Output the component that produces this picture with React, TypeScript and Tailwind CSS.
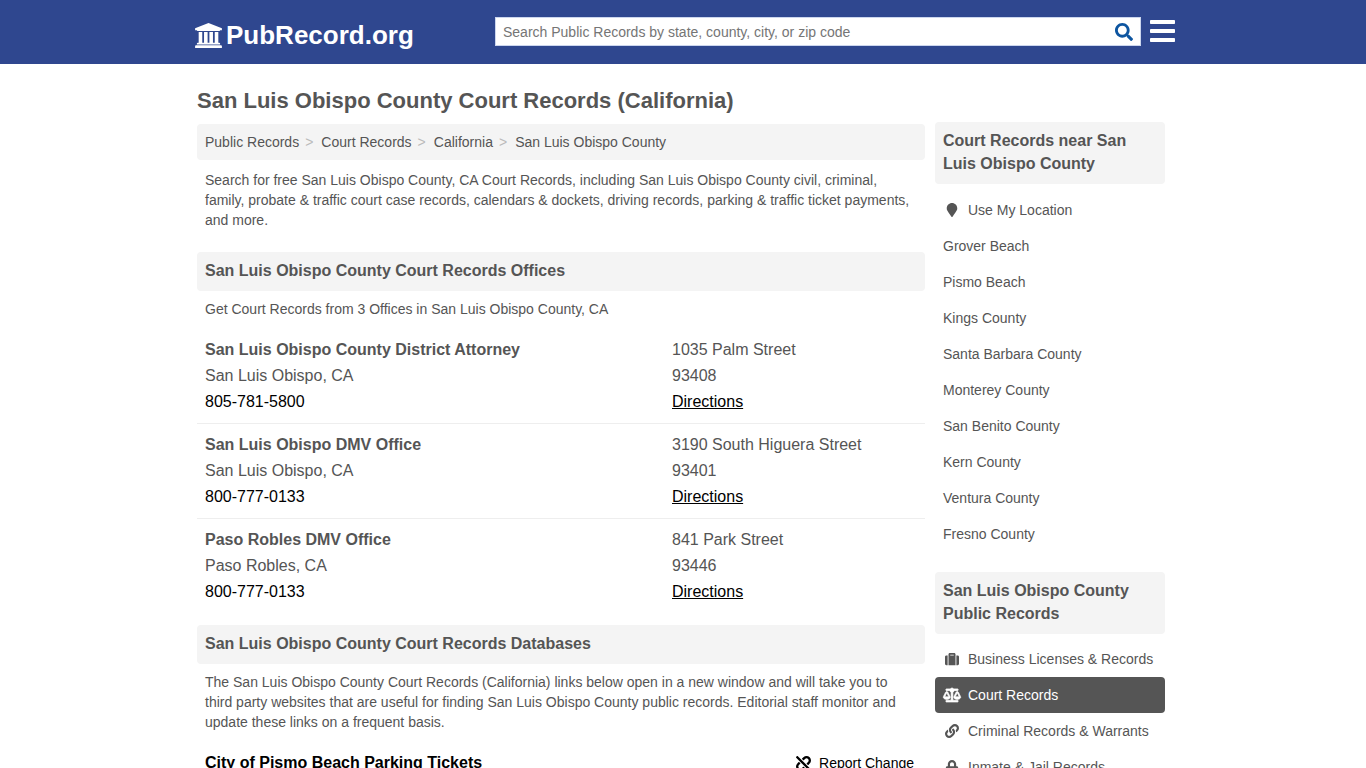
import type { ReactNode } from "react";
import type { IconType } from "react-icons";
import {
  FaBalanceScale,
  FaLink,
  FaLock,
  FaMapMarker,
  FaSearch,
  FaSuitcase,
  FaUnlink,
} from "react-icons/fa";

const crumbs = ["Public Records", "Court Records", "California", "San Luis Obispo County"];

const offices = [
  {
    name: "San Luis Obispo County District Attorney",
    city: "San Luis Obispo, CA",
    phone: "805-781-5800",
    street: "1035 Palm Street",
    zip: "93408",
  },
  {
    name: "San Luis Obispo DMV Office",
    city: "San Luis Obispo, CA",
    phone: "800-777-0133",
    street: "3190 South Higuera Street",
    zip: "93401",
  },
  {
    name: "Paso Robles DMV Office",
    city: "Paso Robles, CA",
    phone: "800-777-0133",
    street: "841 Park Street",
    zip: "93446",
  },
];

const nearby = [
  "Grover Beach",
  "Pismo Beach",
  "Kings County",
  "Santa Barbara County",
  "Monterey County",
  "San Benito County",
  "Kern County",
  "Ventura County",
  "Fresno County",
];

const categories: { label: string; icon: IconType; active?: boolean }[] = [
  { label: "Business Licenses & Records", icon: FaSuitcase },
  { label: "Court Records", icon: FaBalanceScale, active: true },
  { label: "Criminal Records & Warrants", icon: FaLink },
  { label: "Inmate & Jail Records", icon: FaLock },
];

function SectionHeading({ children }: { children: ReactNode }) {
  return (
    <h2 className="rounded bg-[#f4f4f4] px-2 pt-[7px] pb-[9px] text-base leading-[23px] font-bold">
      {children}
    </h2>
  );
}

function CourthouseIcon() {
  return (
    <svg viewBox="0 0 1920 1792" className="h-[25px] w-[27px]" fill="currentColor" aria-hidden="true">
      <path d="M960 0l960 384v128h-128q0 26-20.5 45t-48.5 19h-1526q-28 0-48.5-19t-20.5-45h-128v-128zM256 640h256v768h128v-768h256v768h128v-768h256v768h128v-768h256v768h59q28 0 48.5 19t20.5 45v64h-1664v-64q0-26 20.5-45t48.5-19h59v-768zM1851 1600q28 0 48.5 19t20.5 45v128h-1920v-128q0-26 20.5-45t48.5-19h1782z" />
    </svg>
  );
}

function Header() {
  return (
    <header className="bg-[#2f478f]">
      <div className="mx-auto flex h-16 max-w-[984px] items-center justify-between pl-1">
        <a href="#" className="flex items-center gap-1 pt-[6px] text-[26px] leading-8 font-bold text-white">
          <CourthouseIcon />
          PubRecord.org
        </a>
        <div className="flex w-[680px] items-center gap-[9px] pb-[2px]">
          <form className="flex h-[29px] flex-1 items-center border border-[#ccd6ee] bg-white" role="search">
            <input
              type="text"
              aria-label="Search public records"
              placeholder="Search Public Records by state, county, city, or zip code"
              className="h-full min-w-0 flex-1 px-[7px] pt-px text-sm outline-none placeholder:text-[#757575]"
            />
            <button type="button" aria-label="Search" className="px-[7px] pt-px text-[#0d55a0]">
              <FaSearch className="size-[18px]" />
            </button>
          </form>
          <button type="button" aria-label="Menu" className="text-white">
            <svg viewBox="0 0 25 22" className="h-[22px] w-[25px]" fill="currentColor">
              <rect width="25" height="4" rx="0.8" />
              <rect y="9" width="25" height="4" rx="0.8" />
              <rect y="18" width="25" height="4" rx="0.8" />
            </svg>
          </button>
        </div>
      </div>
    </header>
  );
}

function Breadcrumb() {
  return (
    <nav aria-label="Breadcrumb" className="rounded bg-[#f4f4f4] p-2">
      <ol className="flex">
        {crumbs.map((crumb, i) => (
          <li key={crumb} className="flex">
            <a href="#">{crumb}</a>
            {i < crumbs.length - 1 && <span className="mr-2 ml-[6px] text-[#bbb]">&gt;</span>}
          </li>
        ))}
      </ol>
    </nav>
  );
}

function Sidebar() {
  return (
    <aside className="w-[230px] shrink-0 pt-[33px]">
      <section>
        <SectionHeading>Court Records near San Luis Obispo County</SectionHeading>
        <ul className="pt-2">
          <li>
            <a href="#" className="flex items-center gap-[7px] p-2">
              <FaMapMarker className="w-[18px]" />
              Use My Location
            </a>
          </li>
          {nearby.map((place) => (
            <li key={place}>
              <a href="#" className="block p-2">
                {place}
              </a>
            </li>
          ))}
        </ul>
      </section>
      <section className="pt-5">
        <SectionHeading>San Luis Obispo County Public Records</SectionHeading>
        <ul className="pt-[7px]">
          {categories.map(({ label, icon: Icon, active }) => (
            <li key={label}>
              <a
                href="#"
                className={
                  active
                    ? "flex items-center gap-[7px] rounded bg-[#555] p-2 text-white"
                    : "flex items-center gap-[7px] p-2"
                }
              >
                <Icon className={active ? "w-[18px] overflow-visible stroke-current stroke-[24px]" : "w-[18px]"} />
                {label}
              </a>
            </li>
          ))}
        </ul>
      </section>
    </aside>
  );
}

export default function App() {
  return (
    <div className="bg-white font-['Liberation_Sans',Arial,sans-serif] text-sm text-[#555]">
      <Header />
      <div className="mx-auto flex max-w-[980px] items-start gap-[10px] pt-[25px] pr-2 pl-1">
        <main className="min-w-0 flex-1">
          <h1 className="pb-[11px] text-[22px] leading-6 font-bold">
            San Luis Obispo County Court Records (California)
          </h1>
          <Breadcrumb />
          <p className="px-2 pt-[10px] pb-[22px]">
            Search for free San Luis Obispo County, CA Court Records, including San Luis Obispo County civil,
            criminal, family, probate &amp; traffic court case records, calendars &amp; dockets, driving records,
            parking &amp; traffic ticket payments, and more.
          </p>

          <section>
            <SectionHeading>San Luis Obispo County Court Records Offices</SectionHeading>
            <p className="p-2 pb-[10px]">Get Court Records from 3 Offices in San Luis Obispo County, CA</p>
            <ul className="divide-y divide-[#eee] text-base leading-[26px]">
              {offices.map((office) => (
                <li key={office.name} className="flex py-2">
                  <div className="min-w-0 flex-1 pl-2">
                    <h3 className="font-bold">{office.name}</h3>
                    <p>{office.city}</p>
                    <a href="#" className="block text-black">
                      {office.phone}
                    </a>
                  </div>
                  <div className="w-[253px]">
                    <p>{office.street}</p>
                    <p>{office.zip}</p>
                    <a href="#" className="text-black underline">
                      Directions
                    </a>
                  </div>
                </li>
              ))}
            </ul>
          </section>

          <section className="pt-3">
            <SectionHeading>San Luis Obispo County Court Records Databases</SectionHeading>
            <p className="p-2 pb-[10px]">
              The San Luis Obispo County Court Records (California) links below open in a new window and will take
              you to third party websites that are useful for finding San Luis Obispo County public records.
              Editorial staff monitor and update these links on a frequent basis.
            </p>
            <div className="flex items-center justify-between pt-2 pr-[11px] pl-2 text-black">
              <a href="#" className="text-base leading-[26px] font-bold">
                City of Pismo Beach Parking Tickets
              </a>
              <a href="#" className="flex items-center gap-2">
                <FaUnlink className="size-[15px]" />
                Report Change
              </a>
            </div>
          </section>
        </main>
        <Sidebar />
      </div>
    </div>
  );
}
